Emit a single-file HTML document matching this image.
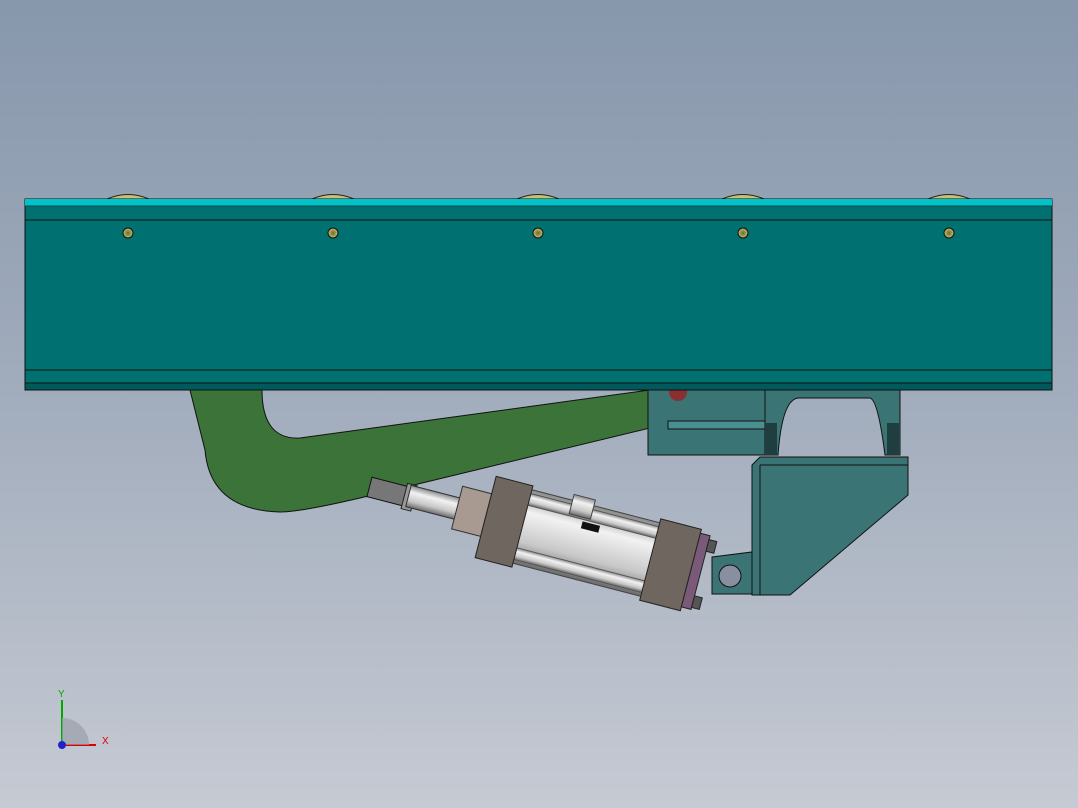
<!DOCTYPE html>
<html><head><style>
html,body{margin:0;padding:0;width:1078px;height:808px;overflow:hidden}
body{background:linear-gradient(#8797ac 0%,#a2adbd 50%,#c6cad3 100%);font-family:"Liberation Sans",sans-serif}
</style></head><body>
<svg width="1078" height="808" viewBox="0 0 1078 808" xmlns="http://www.w3.org/2000/svg" style="position:absolute;left:0;top:0">
<defs>
<linearGradient id="tube" x1="0" y1="0" x2="0" y2="1">
<stop offset="0" stop-color="#8a8a8a"/><stop offset="0.3" stop-color="#f2f2f2"/><stop offset="0.7" stop-color="#c8c8c8"/><stop offset="1" stop-color="#6a6a6a"/>
</linearGradient>
<radialGradient id="hole"><stop offset="0" stop-color="#6a6a30"/><stop offset="1" stop-color="#c8c070"/></radialGradient>
</defs>
<g fill="#c8c078" stroke="#222" stroke-width="1">
<path d="M107 199 Q128 190 149 199Z"/><path d="M312 199 Q333 190 354 199Z"/><path d="M517 199 Q538 190 559 199Z"/><path d="M722 199 Q743 190 764 199Z"/><path d="M928 199 Q949 190 970 199Z"/>
</g>
<path d="M190 390 L262 390 Q262 440 300 438 L650 390 L650 428 L360 498 Q300 512 280 512 Q210 510 205 450 Z" fill="#3b7338" stroke="#111" stroke-width="1"/>
<rect x="648" y="390" width="124" height="65" fill="#3a7474" stroke="#111"/>
<rect x="668" y="421" width="100" height="8" fill="#4a9090" stroke="#111"/>
<circle cx="678" cy="392" r="9" fill="#8a3030"/>
<path d="M765 390 L900 390 L900 455 L885 455 Q878 400 870 398 L798 398 Q782 400 778 455 L765 455Z" fill="#3a7474" stroke="#111"/>
<rect x="765" y="423" width="12" height="32" fill="#1e3e40"/><rect x="887" y="423" width="12" height="32" fill="#1e3e40"/>
<path d="M752 465 L760 457 L908 457 L908 495 L790 595 L752 595Z" fill="#3a7474" stroke="#111"/>
<line x1="760" y1="465" x2="908" y2="465" stroke="#111"/><line x1="760" y1="465" x2="760" y2="595" stroke="#111"/>
<path d="M712 557 L752 552 L752 594 L712 594Z" fill="#3a7474" stroke="#111"/>
<circle cx="730" cy="576" r="11" fill="#8890a0" stroke="#111"/>
<rect x="25" y="199" width="1027" height="191" fill="#007070" stroke="#111"/>
<rect x="25" y="199" width="1027" height="7" fill="#00c2c8"/>
<line x1="25" y1="206" x2="1052" y2="206" stroke="#0a4a4a"/>
<line x1="25" y1="220" x2="1052" y2="220" stroke="#111"/>
<line x1="25" y1="370" x2="1052" y2="370" stroke="#111"/>
<rect x="25" y="383" width="1027" height="7" fill="#005a5c" stroke="#111"/>
<g fill="url(#hole)" stroke="#111"><circle cx="128" cy="233" r="5"/><circle cx="333" cy="233" r="5"/><circle cx="538" cy="233" r="5"/><circle cx="743" cy="233" r="5"/><circle cx="949" cy="233" r="5"/></g>
<g transform="translate(505,522) rotate(14.5)">
<rect x="-140" y="-10" width="40" height="20" fill="#777" stroke="#111"/>
<rect x="-104" y="-13" width="10" height="26" fill="#999" stroke="#222"/>
<rect x="-100" y="-12" width="60" height="22" fill="url(#tube)" stroke="#333"/>
<rect x="-50" y="-24" width="30" height="44" fill="#a89a90" stroke="#333"/>
<rect x="10" y="-38" width="160" height="76" fill="url(#tube)" stroke="#444"/>
<rect x="10" y="-34" width="160" height="12" fill="url(#tube)" stroke="#555"/>
<rect x="10" y="22" width="160" height="12" fill="url(#tube)" stroke="#555"/>
<rect x="60" y="-44" width="22" height="20" fill="url(#tube)" stroke="#444"/>
<rect x="75" y="-20" width="18" height="7" fill="#111"/>
<rect x="-20" y="-42" width="38" height="84" fill="#706660" stroke="#222"/>
<rect x="150" y="-42" width="42" height="84" fill="#706660" stroke="#222"/>
<rect x="192" y="-38" width="10" height="76" fill="#7a5a78" stroke="#222"/>
<rect x="202" y="-34" width="8" height="12" fill="#555" stroke="#222"/>
<rect x="202" y="24" width="8" height="12" fill="#555" stroke="#222"/>
</g>
<path d="M62 700 L62 745" fill="none" stroke="#0a0" stroke-width="2"/>
<path d="M62 745 L96 745" stroke="#d00" stroke-width="2"/>
<path d="M62 718 A27 27 0 0 1 89 745 L62 745Z" fill="#9aa0a8" opacity="0.7"/>
<circle cx="62" cy="745" r="4" fill="#22c"/>
<text x="58" y="697" font-size="10" fill="#0a0" font-family="Liberation Sans">Y</text>
<text x="102" y="744" font-size="10" fill="#d00" font-family="Liberation Sans">X</text>
</svg>
</body></html>
